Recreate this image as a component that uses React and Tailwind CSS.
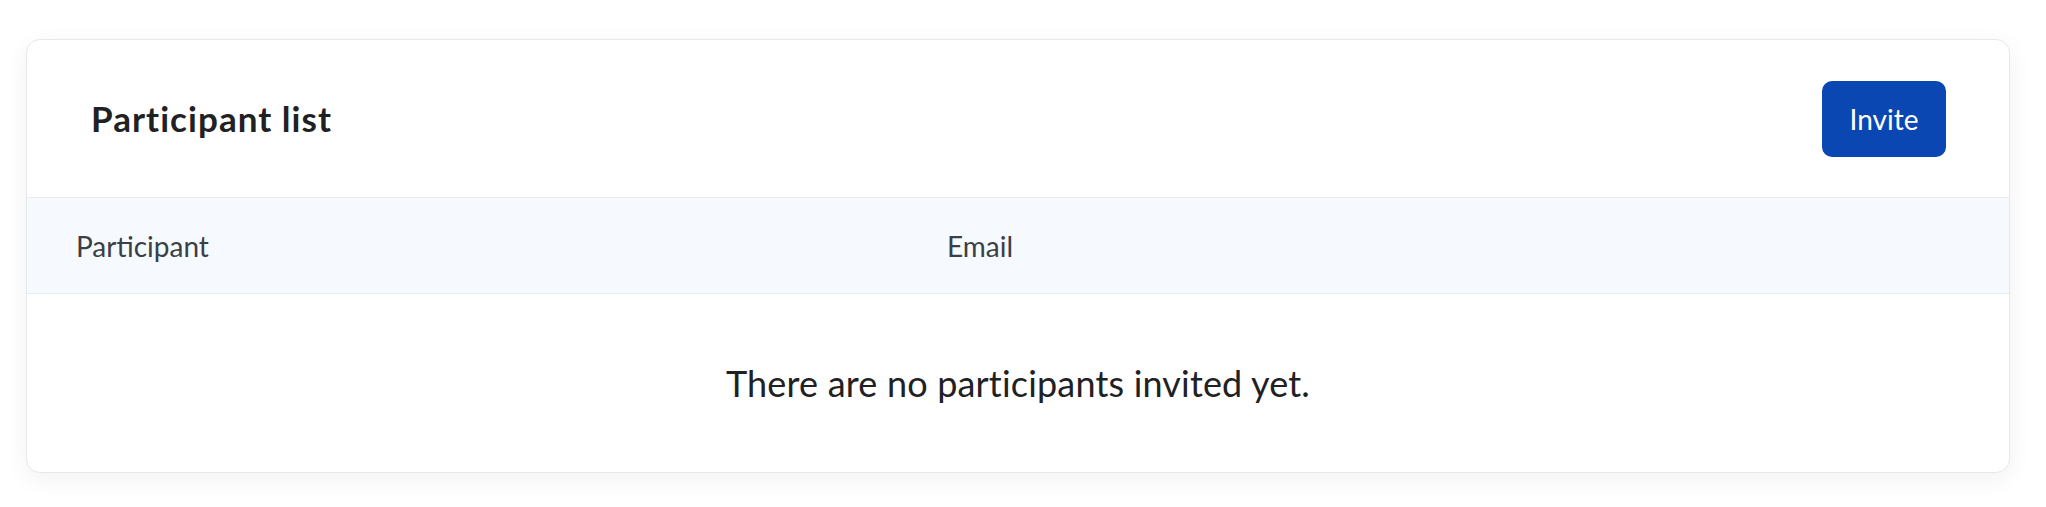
export default function App() {
  const font = { fontFamily: "Lato, 'Open Sans', sans-serif" };
  return (
    <div className="min-h-screen bg-white pl-[26px] pr-[36px] pt-[39px]" style={font}>
      <div className="rounded-[14px] border border-[#e6e8ee] bg-white shadow-[0_6px_24px_rgba(17,24,39,0.06)] overflow-hidden">
        <div className="flex items-center justify-between pl-[64px] pr-[63px] h-[158px] border-b border-[#e8ebf0]">
          <h2 className="text-[35px] font-bold tracking-[0.03em] text-[#1f2123] leading-none">Participant list</h2>
          <button className="h-[76px] w-[124px] rounded-[10px] bg-[#0a47b2] text-white text-[28px] leading-none">
            Invite
          </button>
        </div>
        <div className="flex items-center h-[96px] bg-[#f6f9fd] border-b border-[#e8ebf0] text-[28px] text-[#3b3f46]">
          <div className="w-[920px] pl-[49px]">Participant</div>
          <div>Email</div>
        </div>
        <div className="flex items-center justify-center h-[178px] text-[36px] tracking-[0.005em] text-[#1f2123]">
          There are no participants invited yet.
        </div>
      </div>
    </div>
  );
}
